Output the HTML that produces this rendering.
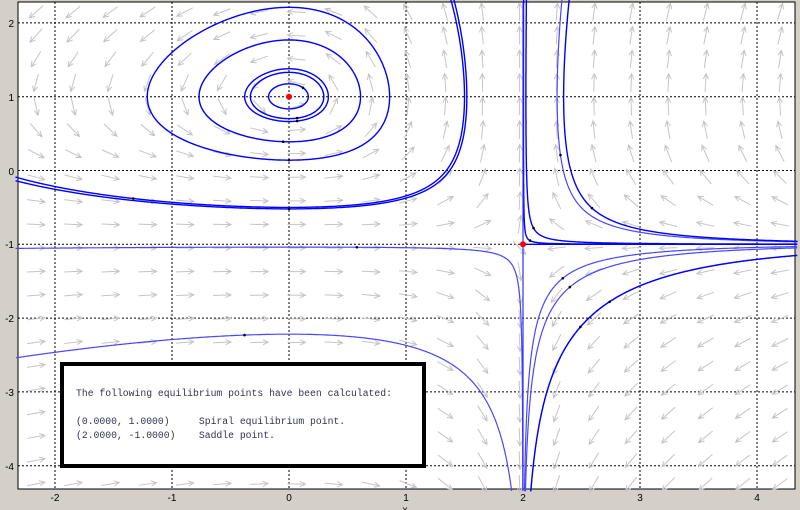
<!DOCTYPE html>
<html><head><style>
html,body{margin:0;padding:0;background:#d4d0c8;width:800px;height:510px;overflow:hidden;font-family:"Liberation Sans",sans-serif}
#c{position:absolute;left:0;top:0}
#box{position:absolute;left:60px;top:362px;width:358px;height:98px;border:4px solid #000;background:#fff;font-family:"Liberation Mono",monospace;font-size:9.75px;color:#33334d;white-space:pre;line-height:14px}
#t{position:absolute;left:12px;top:-7px}
</style></head><body>
<svg id="c" width="800" height="510" xmlns="http://www.w3.org/2000/svg">
<rect x="18" y="2" width="777" height="487" fill="#fff" stroke="#000" stroke-width="1"/>
<g id="grid"></g><g id="arr"></g><g id="traj"></g><g id="pts"></g>
<g font-size="10" fill="#000" font-family="Liberation Sans,sans-serif">
<text x="55" y="501" text-anchor="middle">-2</text><text x="172" y="501" text-anchor="middle">-1</text><text x="289" y="501" text-anchor="middle">0</text><text x="406" y="501" text-anchor="middle">1</text><text x="523" y="501" text-anchor="middle">2</text><text x="640" y="501" text-anchor="middle">3</text><text x="757" y="501" text-anchor="middle">4</text>
<text x="405" y="513" text-anchor="middle">x</text>
<text x="14" y="27" text-anchor="end">2</text><text x="14" y="101" text-anchor="end">1</text><text x="14" y="175" text-anchor="end">0</text><text x="14" y="248" text-anchor="end">-1</text><text x="14" y="322" text-anchor="end">-2</text><text x="14" y="396" text-anchor="end">-3</text><text x="14" y="470" text-anchor="end">-4</text>
</g>
</svg>
<div id="box"><div id="t">

The following equilibrium points have been calculated:

(0.0000, 1.0000)     Spiral equilibrium point.
(2.0000, -1.0000)    Saddle point.</div></div>
<script>
var X0=289,SX=117,Y0=170.5,SY=73.8,L=18,R=795,T=2,B=489;
function px(x){return X0+x*SX}function py(y){return Y0-y*SY}
function f(x,y){return [(x-2)*(y-1),x*(y+1)]}
var ns="http://www.w3.org/2000/svg";
function el(g,t,a){var e=document.createElementNS(ns,t);for(var k in a)e.setAttribute(k,a[k]);document.getElementById(g).appendChild(e);return e}
for(var i=-2;i<=4;i++){el("grid","line",{x1:px(i),x2:px(i),y1:T,y2:B,stroke:"#000","stroke-width":1,"stroke-dasharray":"2,2"});}
for(var j=-4;j<=2;j++){el("grid","line",{x1:L,x2:R,y1:py(j),y2:py(j),stroke:"#000","stroke-width":1,"stroke-dasharray":"2,2"});}
for(var a=0;a<21;a++)for(var b=0;b<21;b++){
 var cx=L+18+a*37.2,cy=T+10+b*23.6;var x=(cx-X0)/SX,y=(Y0-cy)/SY;var v=f(x,y);
 var dx=v[0]*SX,dy=-v[1]*SY;var m=Math.hypot(dx,dy);if(m<1e-9)continue;dx/=m;dy/=m;var l=18;
 var x1=cx-dx*l/2,y1=cy-dy*l/2,x2=cx+dx*l/2,y2=cy+dy*l/2;
 var h=6,ang=0.45,bx=-dx,by=-dy;
 var p="M"+x1+","+y1+"L"+x2+","+y2+"M"+(x2+h*(bx*Math.cos(ang)-by*Math.sin(ang)))+","+(y2+h*(bx*Math.sin(ang)+by*Math.cos(ang)))+"L"+x2+","+y2+"L"+(x2+h*(bx*Math.cos(-ang)-by*Math.sin(-ang)))+","+(y2+h*(bx*Math.sin(-ang)+by*Math.cos(-ang)));
 el("arr","path",{d:p,stroke:"#c4c4c4",fill:"none","stroke-width":1});
}
function g(P){var v=f((P[0]-X0)/SX,(Y0-P[1])/SY);var dx=v[0]*SX,dy=-v[1]*SY;var m=Math.hypot(dx,dy)||1e-9;return [dx/m,dy/m]}
function run(P,dir,maxL){var pts=[P.slice()],h=0.6*dir,s=0,start=P.slice(),moved=false;
 while(s<maxL){var k1=g(P),k2=g([P[0]+h/2*k1[0],P[1]+h/2*k1[1]]),k3=g([P[0]+h/2*k2[0],P[1]+h/2*k2[1]]),k4=g([P[0]+h*k3[0],P[1]+h*k3[1]]);
 P=[P[0]+h/6*(k1[0]+2*k2[0]+2*k3[0]+k4[0]),P[1]+h/6*(k1[1]+2*k2[1]+2*k3[1]+k4[1])];s+=0.6;pts.push(P);
 if(P[0]<L-2||P[0]>R+2||P[1]<T-2||P[1]>B+2)break;
 var d=Math.hypot(P[0]-start[0],P[1]-start[1]);if(d>20)moved=true;if(moved&&d<1)break;}
 return pts}
function traj(x,y,col,w){var P=[px(x),py(y)];var A=run(P,1,4000),Bk=run(P,-1,4000);
 var all=Bk.reverse().concat(A.slice(1));var d="M"+all.map(function(q){return q[0].toFixed(1)+","+q[1].toFixed(1)}).join("L");
 el("traj","path",{d:d,stroke:col||"#0000ff",fill:"none","stroke-width":w||1.4});
 el("pts","circle",{cx:P[0],cy:P[1],r:1.3,fill:"#000"});}
var D="#0000ff",Lt="#4646ff";
traj(0.12,1.12,D);traj(0.07,0.71,D);traj(0.07,0.67,D);traj(-0.05,0.39,D);traj(0,0.14,D);
traj(-1.33,-0.38,D);traj(0,-0.52,D);traj(0.58,-1.04,Lt,1.2);traj(-0.38,-2.23,Lt,1.2);
traj(2.32,0.21,Lt,1.2);traj(2.59,-0.51,D);traj(2.09,-0.78,D);traj(2.06,-0.95,D);
traj(2.34,-1.46,Lt,1.2);traj(2.4,-1.58,Lt,1.2);traj(2.74,-1.78,Lt,1.2);traj(2.49,-2.12,D);
el("traj","line",{x1:px(2),x2:px(2),y1:T,y2:B,stroke:"#3030ff","stroke-width":1.2});
el("traj","line",{x1:px(2),x2:R,y1:py(-1),y2:py(-1),stroke:"#0000ff","stroke-width":1.4});
el("pts","circle",{cx:px(0),cy:py(1),r:3,fill:"#ff0000"});
el("pts","circle",{cx:px(2),cy:py(-1),r:3,fill:"#ff0000"});
</script>
</body></html>
